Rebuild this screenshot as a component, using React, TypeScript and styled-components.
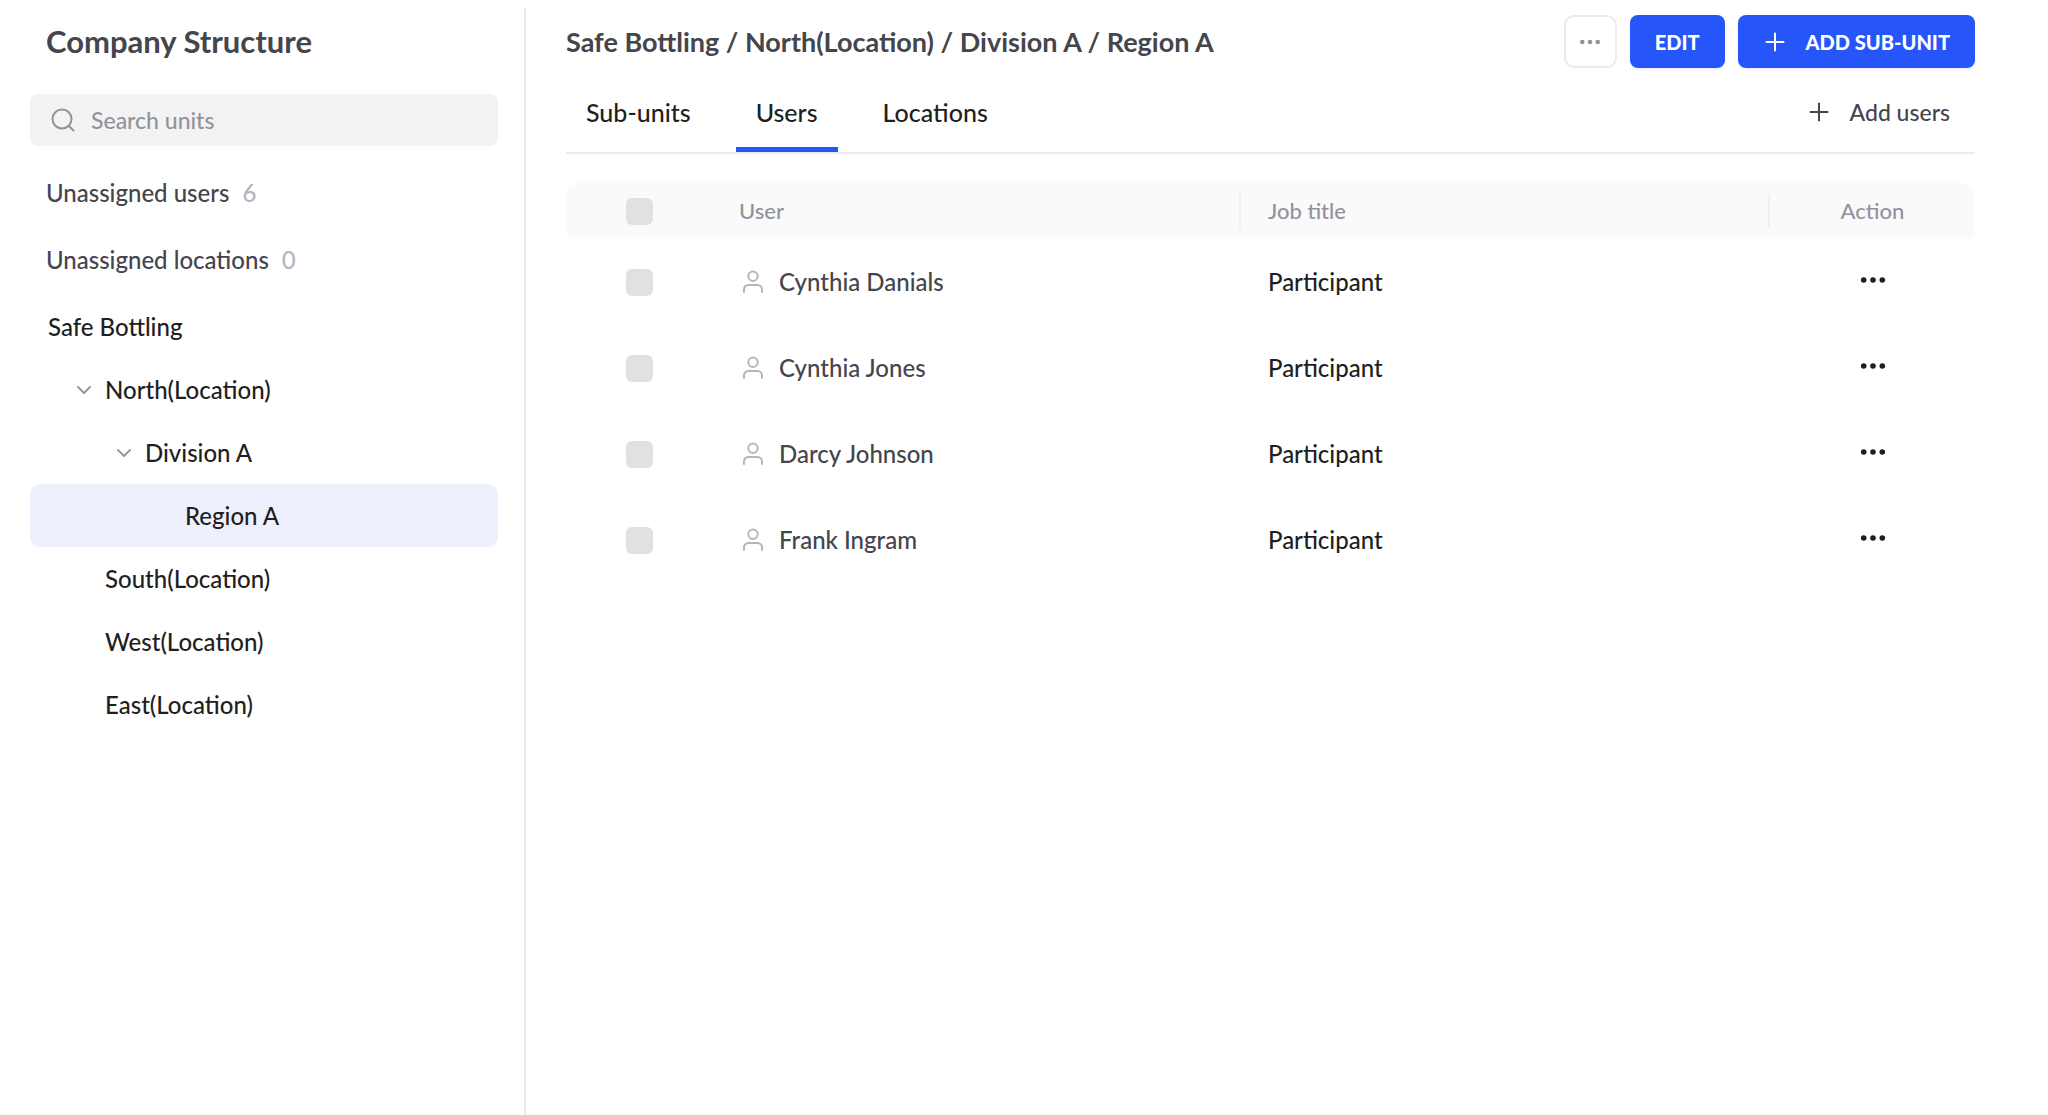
import React, { useState } from 'react';
import styled, { createGlobalStyle } from 'styled-components';

const color = {
  ink: '#1f1f21',
  text: '#45454c',
  muted: '#92929d',
  faint: '#b5b5c0',
  line: '#ebebed',
  divider: '#f0f0f1',
  blue: '#2655fa',
  selected: '#eff0fe',
  field: '#f3f3f3',
  header: '#fafafa',
  box: '#e1e1e1',
};

const GlobalStyle = createGlobalStyle`
  *, *::before, *::after { box-sizing: border-box; }
  body {
    margin: 0;
    background: #fff;
    color: ${color.ink};
    font-family: Lato, "Open Sans", sans-serif;
    font-size: 24px;
    font-weight: 500;
    line-height: 32px;
  }
  button, input { font: inherit; color: inherit; }
  button { margin: 0; padding: 0; border: 0; background: none; cursor: pointer; }
  svg { display: block; flex: none; }
`;

const Shell = styled.div`
  display: flex;
  min-height: 100vh;
  padding-top: 8px;
`;

const Sidebar = styled.aside`
  flex: none;
  width: 526px;
  padding: 15px 26px 0 30px;
  border-right: 2px solid ${color.line};
`;

const SidebarTitle = styled.h1`
  margin: 0 0 35px;
  padding-left: 16px;
  color: ${color.text};
  font-size: 31px;
  line-height: 36px;
  font-weight: 700;
`;

const SearchField = styled.label`
  display: flex;
  align-items: center;
  gap: 15px;
  height: 52px;
  margin-bottom: 13px;
  padding: 0 20px;
  border-radius: 8px;
  background: ${color.field};
  color: ${color.muted};
`;

const SearchInput = styled.input`
  flex: 1;
  min-width: 0;
  padding: 0;
  border: 0;
  outline: 0;
  background: transparent;
  font-size: 23px;
  &::placeholder { color: ${color.muted}; opacity: 1; }
`;

const UnassignedLink = styled.a`
  display: flex;
  align-items: center;
  gap: 13px;
  height: 67px;
  padding-left: 16px;
  color: ${color.text};
  text-decoration: none;
`;

const Count = styled.span`
  color: ${color.faint};
`;

const Tree = styled.ul`
  margin: 2px 0 0;
  padding: 0;
  list-style: none;
`;

const TreeRow = styled.li<{ $level: number; $selected?: boolean }>`
  display: flex;
  align-items: center;
  height: 63px;
  padding-left: ${(p) => (p.$level === 0 ? 18 : p.$level * 40)}px;
  border-radius: 10px;
  background: ${(p) => (p.$selected ? color.selected : 'transparent')};
`;

const Toggle = styled.button`
  display: flex;
  justify-content: center;
  width: 28px;
  margin-right: 7px;
  color: ${color.muted};
`;

const ToggleSpace = styled.span`
  width: 35px;
`;

const UnitButton = styled.button`
  flex: 1;
  text-align: left;
`;

const Main = styled.main`
  flex: 1;
  min-width: 0;
  padding: 7px 73px 0 40px;
`;

const Toolbar = styled.header`
  display: flex;
  align-items: center;
  gap: 13px;
`;

const Breadcrumb = styled.h2`
  flex: 1;
  margin: 0;
  color: ${color.text};
  font-size: 27px;
  line-height: 36px;
  font-weight: 700;
`;

const MoreButton = styled.button`
  display: flex;
  align-items: center;
  justify-content: center;
  width: 53px;
  height: 53px;
  border: 2px solid ${color.line};
  border-radius: 10px;
  color: ${color.muted};
`;

const PrimaryButton = styled.button`
  display: flex;
  align-items: center;
  gap: 19px;
  height: 53px;
  padding: 0 25px;
  border-radius: 8px;
  background: ${color.blue};
  box-shadow: 0 2px 2px rgba(38, 85, 250, 0.08);
  color: #fff;
  font-size: 20px;
  font-weight: 900;
`;

const TabBar = styled.div`
  display: flex;
  align-items: center;
  justify-content: space-between;
  height: 86px;
  padding-top: 4px;
  border-bottom: 2px solid ${color.line};
`;

const TabList = styled.div`
  display: flex;
  align-self: flex-end;
  gap: 25px;
`;

const Tab = styled.button<{ $active: boolean }>`
  height: 74px;
  padding: 0 20px 2px;
  border-bottom: 5px solid ${(p) => (p.$active ? color.blue : 'transparent')};
  font-size: 25px;
`;

const AddUsers = styled.button`
  display: flex;
  align-items: center;
  gap: 19px;
  padding: 0 25px;
  color: ${color.text};
  font-size: 23px;
`;

const Table = styled.table`
  width: 100%;
  margin-top: 29px;
  border-spacing: 0;
  table-layout: fixed;
`;

const CheckCol = styled.col`
  width: 146px;
`;

const ActionCol = styled.col`
  width: 205px;
`;

const HeadCell = styled.th`
  height: 56px;
  padding: 0;
  background: ${color.header};
  color: ${color.muted};
  font-size: 22px;
  font-weight: 500;
  text-align: left;
  &:first-child { border-radius: 12px 0 0 8px; }
  &:last-child { border-radius: 0 12px 8px 0; }
`;

const HeadLabel = styled.div<{ $divided?: boolean; $center?: boolean }>`
  display: flex;
  align-items: center;
  justify-content: ${(p) => (p.$center ? 'center' : 'flex-start')};
  height: 34px;
  padding-left: ${(p) => (p.$center ? 0 : 27)}px;
  border-right: ${(p) => (p.$divided ? `2px solid ${color.divider}` : '0')};
`;

const Cell = styled.td`
  height: 86px;
  padding: 0 0 0 27px;
`;

const CenterCell = styled(Cell)`
  padding: 0;
`;

const Centered = styled.div`
  display: flex;
  align-items: center;
  justify-content: center;
`;

const Checkbox = styled.input`
  appearance: none;
  width: 27px;
  height: 27px;
  margin: 0;
  border-radius: 6px;
  background: ${color.box};
  &:checked { background: ${color.blue}; }
`;

const Person = styled.div`
  display: flex;
  align-items: center;
  gap: 14px;
  padding-left: 2px;
  color: ${color.text};
  svg { color: ${color.faint}; }
`;

const RowMenu = styled.button`
  padding: 8px 8px 13px;
`;

const SearchIcon = () => (
  <svg width="26" height="26" viewBox="0 0 26 26" fill="none" stroke="currentColor" strokeWidth="2" strokeLinecap="round">
    <circle cx="12" cy="12" r="9.5" />
    <path d="M19 19l4.5 4.5" />
  </svg>
);

const ChevronIcon = () => (
  <svg width="16" height="10" viewBox="0 0 16 10" fill="none" stroke="currentColor" strokeWidth="1.8" strokeLinecap="round" strokeLinejoin="round">
    <path d="M2 2l6 6 6-6" />
  </svg>
);

const PlusIcon = () => (
  <svg width="24" height="24" viewBox="0 0 24 24" fill="none" stroke="currentColor" strokeWidth="2" strokeLinecap="round">
    <path d="M12 3.500v17M3.500 12h17" />
  </svg>
);

const UserIcon = () => (
  <svg width="24" height="24" viewBox="0 0 24 24" fill="none" stroke="currentColor" strokeWidth="2" strokeLinecap="round">
    <circle cx="12" cy="6.3" r="4.7" />
    <path d="M3 22v-2.500A4.500 4.500 0 0 1 7.500 15h9a4.500 4.500 0 0 1 4.500 4.500V22" />
  </svg>
);

const DotsIcon = ({ radius, step }: { radius: number; step: number }) => (
  <svg width="26" height="6" viewBox="0 0 26 6" fill="currentColor">
    <circle cx={13 - step} cy="3" r={radius} />
    <circle cx="13" cy="3" r={radius} />
    <circle cx={13 + step} cy="3" r={radius} />
  </svg>
);

const units = [
  { name: 'Safe Bottling', level: 0 },
  { name: 'North(Location)', level: 1, open: true },
  { name: 'Division A', level: 2, open: true },
  { name: 'Region A', level: 3 },
  { name: 'South(Location)', level: 1 },
  { name: 'West(Location)', level: 1 },
  { name: 'East(Location)', level: 1 },
];

const tabs = ['Sub-units', 'Users', 'Locations'];

const users = ['Cynthia Danials', 'Cynthia Jones', 'Darcy Johnson', 'Frank Ingram'];

export default function App() {
  const [unit, setUnit] = useState('Region A');
  const [tab, setTab] = useState('Users');

  return (
    <>
      <GlobalStyle />
      <Shell>
        <Sidebar>
          <SidebarTitle>Company Structure</SidebarTitle>
          <SearchField>
            <SearchIcon />
            <SearchInput type="text" placeholder="Search units" aria-label="Search units" />
          </SearchField>
          <UnassignedLink href="#users">
            Unassigned users <Count>6</Count>
          </UnassignedLink>
          <UnassignedLink href="#locations">
            Unassigned locations <Count>0</Count>
          </UnassignedLink>
          <Tree>
            {units.map((u) => (
              <TreeRow key={u.name} $level={u.level} $selected={u.name === unit}>
                {u.open && (
                  <Toggle aria-label={`Collapse ${u.name}`}>
                    <ChevronIcon />
                  </Toggle>
                )}
                {!u.open && u.level > 0 && <ToggleSpace />}
                <UnitButton onClick={() => setUnit(u.name)}>{u.name}</UnitButton>
              </TreeRow>
            ))}
          </Tree>
        </Sidebar>
        <Main>
          <Toolbar>
            <Breadcrumb>Safe Bottling / North(Location) / Division A / Region A</Breadcrumb>
            <MoreButton aria-label="More options">
              <DotsIcon radius={2.3} step={7.7} />
            </MoreButton>
            <PrimaryButton>EDIT</PrimaryButton>
            <PrimaryButton>
              <PlusIcon />
              ADD SUB-UNIT
            </PrimaryButton>
          </Toolbar>
          <TabBar>
            <TabList role="tablist">
              {tabs.map((t) => (
                <Tab key={t} role="tab" aria-selected={t === tab} $active={t === tab} onClick={() => setTab(t)}>
                  {t}
                </Tab>
              ))}
            </TabList>
            <AddUsers>
              <PlusIcon />
              Add users
            </AddUsers>
          </TabBar>
          <Table>
            <colgroup>
              <CheckCol />
              <col />
              <col />
              <ActionCol />
            </colgroup>
            <thead>
              <tr>
                <HeadCell>
                  <Centered>
                    <Checkbox type="checkbox" aria-label="Select all users" />
                  </Centered>
                </HeadCell>
                <HeadCell>
                  <HeadLabel $divided>User</HeadLabel>
                </HeadCell>
                <HeadCell>
                  <HeadLabel $divided>Job title</HeadLabel>
                </HeadCell>
                <HeadCell>
                  <HeadLabel $center>Action</HeadLabel>
                </HeadCell>
              </tr>
            </thead>
            <tbody>
              {users.map((name) => (
                <tr key={name}>
                  <CenterCell>
                    <Centered>
                      <Checkbox type="checkbox" aria-label={`Select ${name}`} />
                    </Centered>
                  </CenterCell>
                  <Cell>
                    <Person>
                      <UserIcon />
                      {name}
                    </Person>
                  </Cell>
                  <Cell>Participant</Cell>
                  <CenterCell>
                    <Centered>
                      <RowMenu aria-label={`Actions for ${name}`}>
                        <DotsIcon radius={2.8} step={9.3} />
                      </RowMenu>
                    </Centered>
                  </CenterCell>
                </tr>
              ))}
            </tbody>
          </Table>
        </Main>
      </Shell>
    </>
  );
}
